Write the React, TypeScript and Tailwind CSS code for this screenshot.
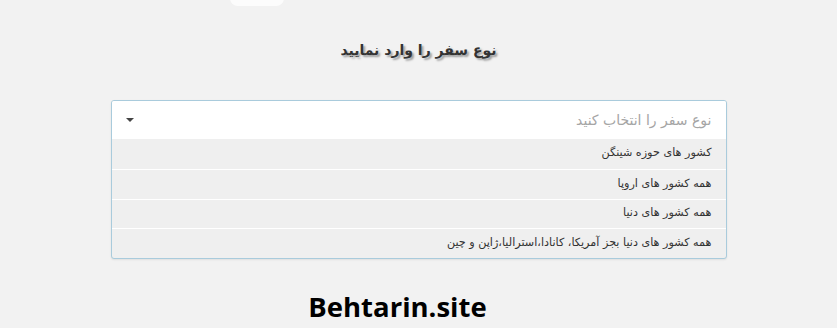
const options = [
  "کشور های حوزه شینگن",
  "همه کشور های اروپا",
  "همه کشور های دنیا",
  "همه کشور های دنیا بجز آمریکا، کانادا،استرالیا،ژاپن و چین",
];

export default function App() {
  return (
    <div className="relative h-[328px] w-[837px] overflow-hidden bg-[#f2f2f2]">
      {/* faint pill peeking from the top */}
      <div className="absolute left-[230px] top-[-10px] h-[16px] w-[54px] rounded-full bg-white/80" />

      <div className="flex flex-col items-center pt-[37px]">
        <h2
          dir="rtl"
          className="text-[14px] font-bold leading-[26px] text-[#333] [font-family:'DejaVu_Sans',sans-serif] [text-shadow:2px_2px_2px_rgba(0,0,0,0.35)]"
        >
          نوع سفر را وارد نمایید
        </h2>

        <div className="mt-[37px] w-[616px] overflow-hidden rounded-[3px] border border-[#a9cbdc] bg-[#efefef] shadow-[0_1px_2px_rgba(0,0,0,0.08)]">
          <div className="flex h-[38px] items-center justify-between bg-white pl-[14px] pr-[14px]">
            <span className="h-0 w-0 border-x-[4px] border-t-[4px] border-x-transparent border-t-[#444]" />
            <span
              dir="rtl"
              className="text-[14px] text-[#a5a5a5] [font-family:'DejaVu_Sans',sans-serif]"
            >
              نوع سفر را انتخاب کنید
            </span>
          </div>
          {options.map((opt, i) => (
            <div
              key={opt}
              dir="rtl"
              className={`flex h-[29.75px] items-center pr-[14px] text-[11.2px] text-[#333] [font-family:'DejaVu_Sans',sans-serif] ${
                i > 0 ? "border-t border-white" : ""
              }`}
            >
              {opt}
            </div>
          ))}
        </div>

        <div className="mr-[42px] mt-[30px] text-[27.5px] font-bold leading-[36px] text-black [font-family:'Open_Sans',sans-serif]">
          Behtarin.site
        </div>
      </div>
    </div>
  );
}
